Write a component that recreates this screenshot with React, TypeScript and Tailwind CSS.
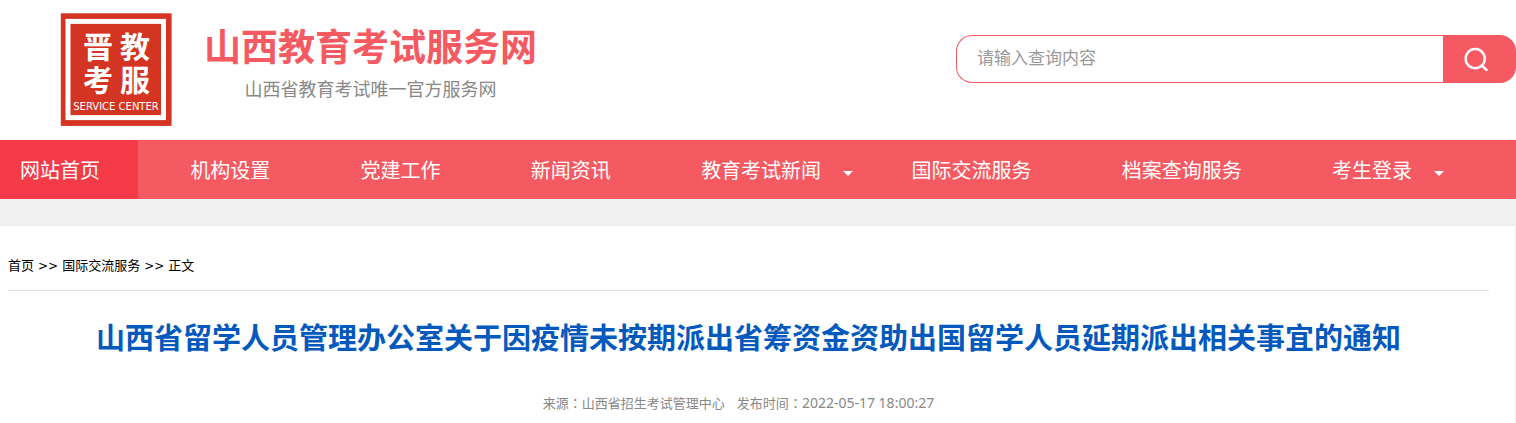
import React from "react"

type NavItem = {
    title:string;
    active?:boolean;
    hasMenu?:boolean;
};

const NAV_ITEMS: NavItem[] = [
    { title: "网站首页", active: true },
    { title: "机构设置" },
    { title: "党建工作" },
    { title: "新闻资讯" },
    { title: "教育考试新闻", hasMenu: true },
    { title: "国际交流服务" },
    { title: "档案查询服务" },
    { title: "考生登录", hasMenu: true },
];

function Logo() {
    return (
        <svg className="w-28 h-[114px] shrink-0" viewBox="0 0 112 114" role="img" aria-label="教服晋考">
            <rect x="0.8" y="0.3" width="110.8" height="112.6" fill="#d43522" />
            <rect x="8" y="8.4" width="95.5" height="96.2" fill="none" stroke="#fff" strokeWidth="5" />
            <g fill="#fff" fontFamily="'Noto Sans CJK SC', sans-serif" fontWeight="700" fontSize="30" textAnchor="middle">
                <text x="38" y="45">晋</text>
                <text x="75" y="45">教</text>
                <text x="38" y="78">考</text>
                <text x="75" y="78">服</text>
            </g>
            <text x="56" y="97" fill="#fff" fontFamily="'DejaVu Sans', sans-serif" fontSize="10" textAnchor="middle">SERVICE CENTER</text>
        </svg>
    )
}

function SearchBar() {
    return (
        <form className="flex w-[560px] h-12 mt-[35px]" onSubmit={(e) => e.preventDefault()}>
            <input
                className="flex-1 min-w-0 px-5 pb-0.5 text-[17px] rounded-l-2xl border border-r-0 border-[#f55a62] bg-white placeholder:text-[#999] outline-none"
                type="text"
                aria-label="请输入查询内容"
                placeholder="请输入查询内容"
            />
            <button className="w-[73px] flex items-center justify-center pr-2 rounded-r-2xl bg-[#f55a62]" type="submit" aria-label="搜索">
                <svg className="w-7 h-7" viewBox="0 0 28 28" fill="none" stroke="#fff" strokeWidth="2.4" strokeLinecap="round">
                    <circle cx="13.2" cy="13.6" r="9.6" />
                    <path d="M19.8 20.6 L24.6 25" />
                </svg>
            </button>
        </form>
    )
}

function NavBar() {
    return (
        <nav className="flex justify-between h-[59px] pr-[66px] bg-[#f55a62] text-xl text-white whitespace-nowrap">
            {NAV_ITEMS.map((item:NavItem, key:number) => {
                return (
                    <a className={item.active ? "flex items-center pl-5 pt-0.5 bg-[#f43b47]" : "flex items-center pl-5 pt-0.5"} href="#" key={key}>
                        {item.title}
                        <span className="w-[38px] flex justify-center pl-4 pt-1.5">
                            {item.hasMenu && (
                                <svg className="w-[10px] h-[5px]" viewBox="0 0 10 5" fill="#fff">
                                    <path d="M0 0 H10 L5 5 Z" />
                                </svg>
                            )}
                        </span>
                    </a>
                )
            })}
        </nav>
    )
}

// full-width colon, centred in its cell
function Colon() {
    return <span className="font-['Noto_Sans_CJK_TC',sans-serif]" lang="zh-TW">：</span>
}

export default function App() {
    return (
        <div className="min-h-screen flex flex-col bg-white font-['Noto_Sans','Noto_Sans_CJK_SC',sans-serif]" lang="zh-CN">
            {/* Header */}
            <header className="flex justify-between h-[140px]">
                <div className="flex pl-[60px] pt-[13px] gap-8">
                    <Logo />
                    <div className="flex flex-col items-center pt-2">
                        <p className="text-[37px] leading-[52px] font-bold text-[#f55a62]">山西教育考试服务网</p>
                        <p className="text-lg leading-8 text-[#888]">山西省教育考试唯一官方服务网</p>
                    </div>
                </div>
                <SearchBar />
            </header>
            <NavBar />
            <div className="h-[26px] bg-[#f0f0f0]" />
            {/* Article */}
            <main className="flex-1 pl-2 pr-[26px] border-t border-r border-[#ebebeb]">
                <div className="h-[65px] flex items-center pt-4 gap-1 text-[13px] text-black border-b border-[#e2e2e2]">
                    <a href="#">首页</a>
                    <span className="text-xs font-['DejaVu_Sans',sans-serif]">&gt;&gt;</span>
                    <a href="#">国际交流服务</a>
                    <span className="text-xs font-['DejaVu_Sans',sans-serif]">&gt;&gt;</span>
                    <span>正文</span>
                </div>
                <h1 className="pt-6 text-[29px] leading-[46px] font-bold text-center text-[#0459bd]">
                    山西省留学人员管理办公室关于因疫情未按期派出省筹资金资助出国留学人员延期派出相关事宜的通知
                </h1>
                <p className="flex justify-center gap-3 pt-8 pr-5 text-[13px] leading-5 text-[#888]">
                    <span>来源<Colon />山西省招生考试管理中心</span>
                    <span>发布时间<Colon /><span className="text-sm leading-5">2022-05-17 18:00:27</span></span>
                </p>
            </main>
        </div>
    )
}
